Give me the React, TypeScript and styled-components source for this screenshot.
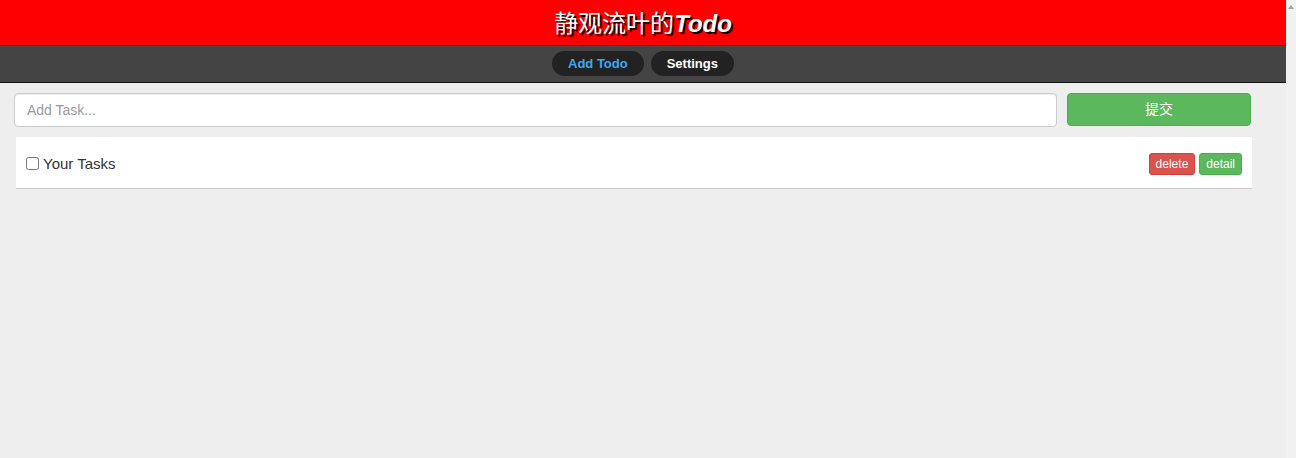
import React from "react";
import styled, { createGlobalStyle } from "styled-components";

const Global = createGlobalStyle`
  body {
    margin: 0;
    background: #eeeeee;
    font-family: "Liberation Sans", Arial, "Noto Sans CJK SC", sans-serif;
    color: #333;
  }
`;

const Page = styled.div`
  margin-right: 10px;
`;

const ScrollTrack = styled.div`
  position: fixed;
  top: 0;
  right: 0;
  bottom: 0;
  width: 10px;
  background: #f1f1f1;
  display: flex;
  justify-content: center;
  padding-top: 5px;
  box-sizing: border-box;
`;

const ScrollArrow = styled.div`
  width: 0;
  height: 0;
  border-left: 3px solid transparent;
  border-right: 3px solid transparent;
  border-bottom: 4px solid #a3a3a3;
`;

const Header = styled.header`
  height: 45px;
  background: #ff0000;
  border-bottom: 1px solid #111;
  display: flex;
  align-items: center;
  justify-content: center;
`;

const Title = styled.h1`
  margin: 0;
  font-size: 24px;
  font-weight: normal;
  color: #fff;
  font-family: "Noto Sans CJK SC", sans-serif;
  text-shadow: 2px 2px 1px #000;
  line-height: 1;
`;

const TitleEm = styled.span`
  font-family: "Liberation Sans", Arial, sans-serif;
  font-weight: 900;
  font-style: italic;
`;

const Nav = styled.nav`
  height: 36px;
  background: #444444;
  border-bottom: 1px solid #111;
  display: flex;
  align-items: center;
  justify-content: center;
  gap: 7px;
`;

const NavButton = styled.button<{ $active?: boolean }>`
  height: 25px;
  padding: 0 16px;
  margin-top: -2px;
  border: none;
  border-radius: 13px;
  background: #222222;
  color: ${(p) => (p.$active ? "#3fa9f5" : "#ffffff")};
  font-family: "Liberation Sans", Arial, sans-serif;
  font-size: 13px;
  font-weight: bold;
  cursor: pointer;
`;

const Main = styled.main`
  padding: 10px 35px 0 14px;
`;

const Form = styled.form`
  display: flex;
  gap: 10px;
`;

const Input = styled.input`
  flex: 1;
  height: 34px;
  box-sizing: border-box;
  border: 1px solid #ccc;
  border-radius: 4px;
  padding: 6px 12px;
  font-size: 14px;
  font-family: "Liberation Sans", Arial, sans-serif;
  color: #555;
  background: #fff;
  box-shadow: inset 0 1px 1px rgba(0, 0, 0, 0.075);
  &::placeholder { color: #999; }
`;

const Submit = styled.button`
  width: 184px;
  height: 33px;
  padding: 0 0 3px;
  border: 1px solid #4cae4c;
  border-radius: 4px;
  background: #5cb85c;
  color: #fff;
  font-size: 14px;
  font-family: "Noto Sans CJK SC", sans-serif;
`;

const Card = styled.div`
  margin: 10px -1px 0 2px;
  height: 51px;
  background: #fff;
  border-bottom: 1px solid #ccc;
  display: flex;
  align-items: center;
  padding: 0 10px;
`;

const Label = styled.label`
  display: flex;
  align-items: center;
  gap: 4px;
  font-size: 15px;
  color: #333;
  flex: 1;
  margin-top: 2px;
`;

const Check = styled.input`
  margin: 0;
  width: 13px;
  height: 13px;
`;

const Actions = styled.div`
  display: flex;
  gap: 4px;
  margin-top: 2px;
`;

const SmallButton = styled.button<{ $kind: "danger" | "success" }>`
  height: 22px;
  padding: 0 6px;
  border-radius: 3px;
  font-size: 12px;
  font-family: "Liberation Sans", Arial, sans-serif;
  color: #fff;
  background: ${(p) => (p.$kind === "danger" ? "#d9534f" : "#5cb85c")};
  border: 1px solid ${(p) => (p.$kind === "danger" ? "#d43f3a" : "#4cae4c")};
`;

export default function App() {
  return (
    <>
      <Global />
      <Page>
        <Header>
          <Title>
            静观流叶的<TitleEm>Todo</TitleEm>
          </Title>
        </Header>
        <Nav>
          <NavButton $active>Add Todo</NavButton>
          <NavButton>Settings</NavButton>
        </Nav>
        <Main>
          <Form onSubmit={(e) => e.preventDefault()}>
            <Input placeholder="Add Task..." />
            <Submit type="submit">提交</Submit>
          </Form>
          <Card>
            <Label>
              <Check type="checkbox" />
              Your Tasks
            </Label>
            <Actions>
              <SmallButton $kind="danger">delete</SmallButton>
              <SmallButton $kind="success">detail</SmallButton>
            </Actions>
          </Card>
        </Main>
      </Page>
      <ScrollTrack>
        <ScrollArrow />
      </ScrollTrack>
    </>
  );
}
